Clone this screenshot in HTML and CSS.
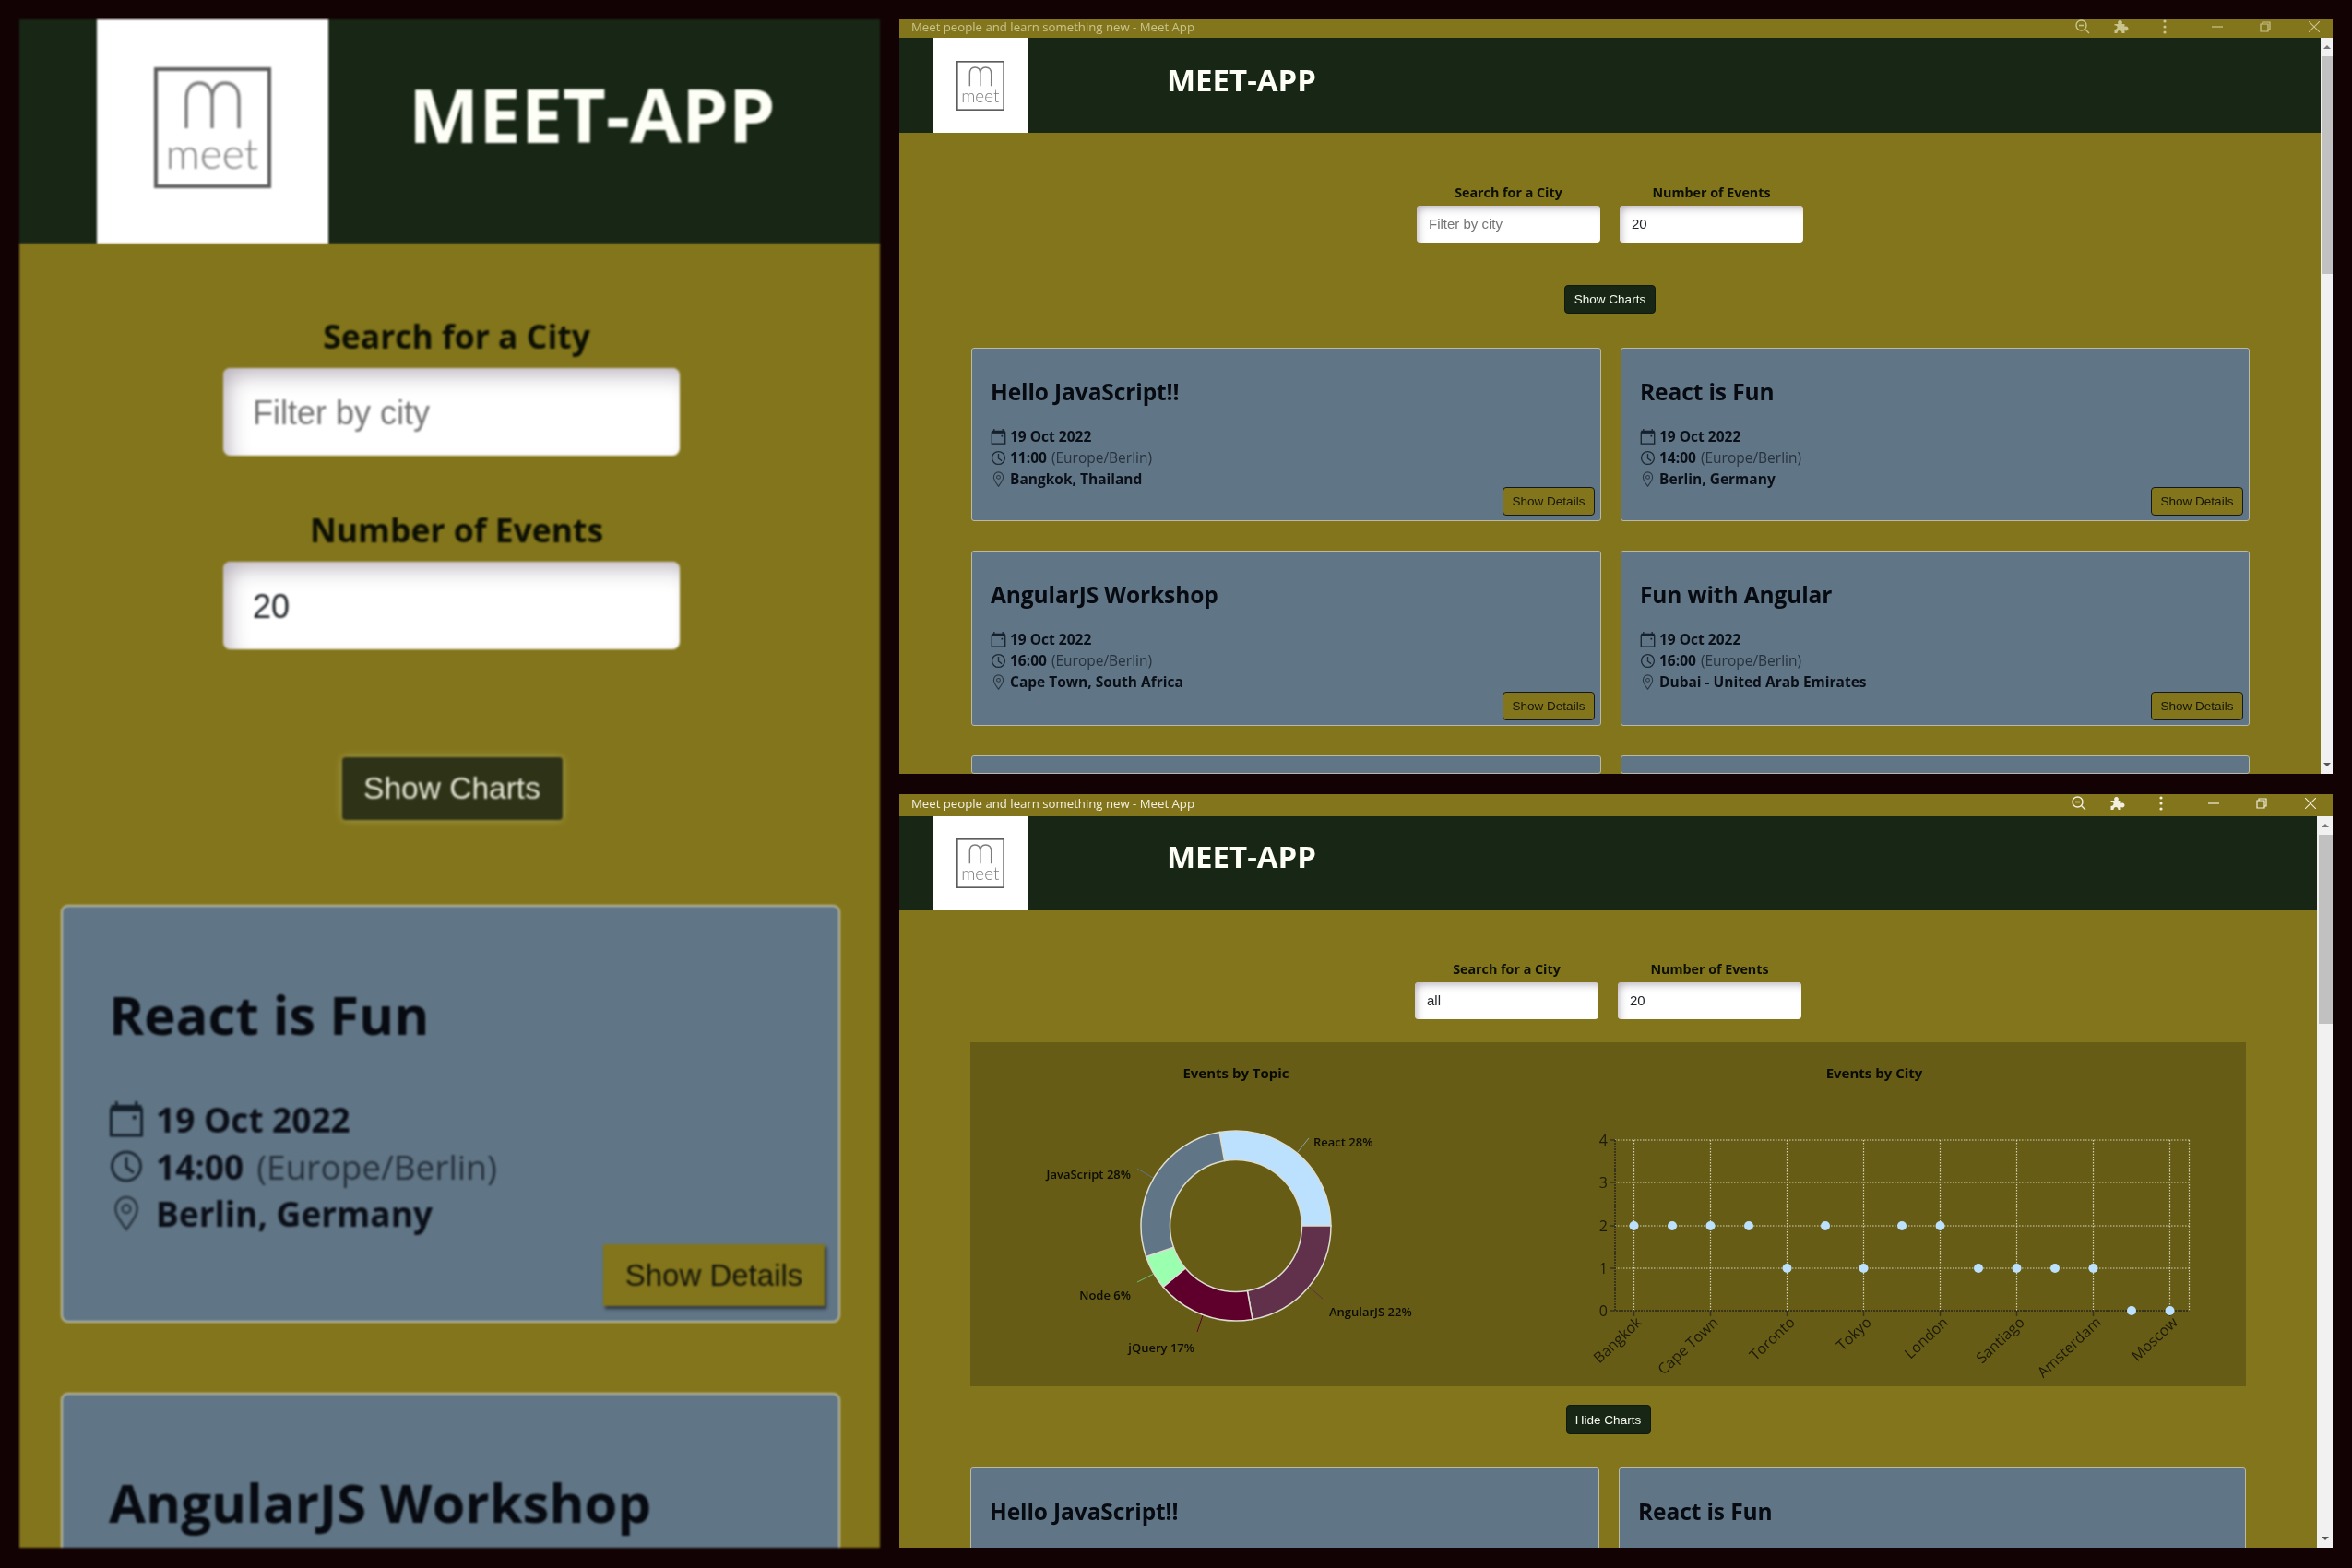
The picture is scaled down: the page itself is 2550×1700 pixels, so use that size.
FILE: index.html
```html
<!DOCTYPE html>
<html lang="en">
<head>
<meta charset="utf-8">
<title>Meet App</title>
<link rel="stylesheet" href="styles.css">
</head>
<body>
<svg class="defs" width="0" height="0" aria-hidden="true">
  <defs>
    <g id="logo-mark">
      <rect x="2" y="2" width="123" height="127" fill="#fff" stroke="#5c5c5c" stroke-width="4"/>
      <path d="M35 66V34C35 23 41 17 49 17C58 17 63 24 63 34V66M63 34C63 24 68 17 77 17C86 17 92 23 92 34V66" fill="none" stroke="#7d7d7d" stroke-width="3.5"/>
    </g>
  </defs>
  <symbol id="cal" viewBox="0 0 38 40">
    <path d="M2 9H36V38H2Z" fill="none" stroke="#14202c" stroke-width="3"/>
    <path d="M2 4H36V11H2Z" fill="#14202c"/>
    <path d="M8 0V5M30 0V5" stroke="#14202c" stroke-width="3"/>
    <rect x="26" y="16" width="4" height="4" fill="#14202c"/>
  </symbol>
  <symbol id="clock" viewBox="0 0 38 38">
    <circle cx="19" cy="19" r="15.5" fill="none" stroke="#1d2935" stroke-width="3"/>
    <path d="M19 9V20L27 26" fill="none" stroke="#1d2935" stroke-width="3"/>
  </symbol>
  <symbol id="pin" viewBox="0 0 38 40">
    <path d="M19 38C12 28 7 22 7 15A12 13 0 0 1 31 15C31 22 26 28 19 38Z" fill="none" stroke="#2b3743" stroke-width="2.6"/>
    <circle cx="19" cy="15" r="4.5" fill="none" stroke="#2b3743" stroke-width="2.4"/>
  </symbol>
  <symbol id="zoom" viewBox="0 0 16 16">
    <circle cx="6.5" cy="6.5" r="5.5" fill="none" stroke="currentColor" stroke-width="1.4"/>
    <path d="M4 6.5H9M10.5 10.5L15 15" fill="none" stroke="currentColor" stroke-width="1.4"/>
  </symbol>
  <symbol id="puzzle" viewBox="0 0 16 16">
    <path d="M1 5H5C4 3 5 1 7 1C9 1 10 3 9 5H12V8C14 7 16 8 16 10C16 12 14 13 12 12V15H9C9 13 8 12 6.500 12C5 12 4 13 4 15H1V11C3 11 4 10 4 8.500C4 7 3 6.500 1 6.500Z" fill="currentColor"/>
  </symbol>
  <symbol id="dots" viewBox="0 0 4 16">
    <circle cx="2" cy="2" r="1.600" fill="currentColor"/>
    <circle cx="2" cy="8" r="1.600" fill="currentColor"/>
    <circle cx="2" cy="14" r="1.600" fill="currentColor"/>
  </symbol>
  <symbol id="min" viewBox="0 0 12 12"><path d="M0 6H12" stroke="currentColor" stroke-width="1.200"/></symbol>
  <symbol id="restore" viewBox="0 0 12 12">
    <path d="M3 2.500V1H11V9H9M1 3H9V11H1Z" fill="none" stroke="currentColor" stroke-width="1.200"/>
  </symbol>
  <symbol id="close" viewBox="0 0 12 12"><path d="M0 0L12 12M12 0L0 12" stroke="currentColor" stroke-width="1.100"/></symbol>
</svg>

<main class="collage">

  <section class="window window-large">
    <div class="page">
      <header class="app-header">
        <div class="logo-box"><svg class="logo" viewBox="0 0 127 131" preserveAspectRatio="none"><use href="#logo-mark"/><text x="63" y="110" class="logo-word" text-anchor="middle">meet</text></svg></div>
        <h1 class="brand">MEET-APP</h1>
      </header>
      <div class="filters">
        <div class="field">
          <label class="field-label">Search for a City</label>
          <div class="input placeholder">Filter by city</div>
        </div>
        <div class="field">
          <label class="field-label">Number of Events</label>
          <div class="input">20</div>
        </div>
      </div>
      <button class="toggle">Show Charts</button>
      <div class="events">
        <article class="card">
          <div class="card-body">
            <h2 class="card-title">React is Fun</h2>
            <div class="meta"><svg class="mi"><use href="#cal"/></svg><b>19 Oct 2022</b></div>
            <div class="meta"><svg class="mi"><use href="#clock"/></svg><b>14:00</b><span class="tz">(Europe/Berlin)</span></div>
            <div class="meta"><svg class="mi"><use href="#pin"/></svg><b>Berlin, Germany</b></div>
          </div>
          <button class="details">Show Details</button>
        </article>
        <article class="card">
          <div class="card-body">
            <h2 class="card-title">AngularJS Workshop</h2>
          </div>
        </article>
      </div>
    </div>
  </section>

  <div class="stack">
    <section class="window window-small window-inactive">
      <div class="titlebar">
        <span class="tab-title">Meet people and learn something new - Meet App</span>
        <div class="controls">
          <svg class="ctl ctl-zoom"><use href="#zoom"/></svg>
          <svg class="ctl ctl-puzzle"><use href="#puzzle"/></svg>
          <svg class="ctl ctl-dots"><use href="#dots"/></svg>
          <svg class="ctl ctl-min"><use href="#min"/></svg>
          <svg class="ctl ctl-restore"><use href="#restore"/></svg>
          <svg class="ctl ctl-close"><use href="#close"/></svg>
        </div>
      </div>
      <div class="viewport">
        <div class="page">
          <header class="app-header">
            <div class="logo-box"><svg class="logo" viewBox="0 0 127 131" preserveAspectRatio="none"><use href="#logo-mark"/><text x="63" y="110" class="logo-word" text-anchor="middle">meet</text></svg></div>
            <h1 class="brand">MEET-APP</h1>
          </header>
          <div class="filters">
            <div class="field">
              <label class="field-label">Search for a City</label>
              <div class="input placeholder">Filter by city</div>
            </div>
            <div class="field">
              <label class="field-label">Number of Events</label>
              <div class="input">20</div>
            </div>
          </div>
          <button class="toggle toggle-show">Show Charts</button>
          <div class="events">
            <article class="card">
              <div class="card-body">
                <h2 class="card-title">Hello JavaScript!!</h2>
                <div class="meta"><svg class="mi"><use href="#cal"/></svg><b>19 Oct 2022</b></div>
                <div class="meta"><svg class="mi"><use href="#clock"/></svg><b>11:00</b><span class="tz">(Europe/Berlin)</span></div>
                <div class="meta"><svg class="mi"><use href="#pin"/></svg><b>Bangkok, Thailand</b></div>
              </div>
              <button class="details">Show Details</button>
            </article>
            <article class="card">
              <div class="card-body">
                <h2 class="card-title">React is Fun</h2>
                <div class="meta"><svg class="mi"><use href="#cal"/></svg><b>19 Oct 2022</b></div>
                <div class="meta"><svg class="mi"><use href="#clock"/></svg><b>14:00</b><span class="tz">(Europe/Berlin)</span></div>
                <div class="meta"><svg class="mi"><use href="#pin"/></svg><b>Berlin, Germany</b></div>
              </div>
              <button class="details">Show Details</button>
            </article>
            <article class="card">
              <div class="card-body">
                <h2 class="card-title">AngularJS Workshop</h2>
                <div class="meta"><svg class="mi"><use href="#cal"/></svg><b>19 Oct 2022</b></div>
                <div class="meta"><svg class="mi"><use href="#clock"/></svg><b>16:00</b><span class="tz">(Europe/Berlin)</span></div>
                <div class="meta"><svg class="mi"><use href="#pin"/></svg><b>Cape Town, South Africa</b></div>
              </div>
              <button class="details">Show Details</button>
            </article>
            <article class="card">
              <div class="card-body">
                <h2 class="card-title">Fun with Angular</h2>
                <div class="meta"><svg class="mi"><use href="#cal"/></svg><b>19 Oct 2022</b></div>
                <div class="meta"><svg class="mi"><use href="#clock"/></svg><b>16:00</b><span class="tz">(Europe/Berlin)</span></div>
                <div class="meta"><svg class="mi"><use href="#pin"/></svg><b>Dubai - United Arab Emirates</b></div>
              </div>
              <button class="details">Show Details</button>
            </article>
            <article class="card"></article>
            <article class="card"></article>
          </div>
        </div>
        <div class="scrollbar scrollbar-top">
          <span class="arrow arrow-up"></span>
          <span class="thumb"></span>
          <span class="track"></span>
          <span class="arrow arrow-down"></span>
        </div>
      </div>
    </section>

    <section class="window window-small window-charts">
      <div class="titlebar">
        <span class="tab-title">Meet people and learn something new - Meet App</span>
        <div class="controls">
          <svg class="ctl ctl-zoom"><use href="#zoom"/></svg>
          <svg class="ctl ctl-puzzle"><use href="#puzzle"/></svg>
          <svg class="ctl ctl-dots"><use href="#dots"/></svg>
          <svg class="ctl ctl-min"><use href="#min"/></svg>
          <svg class="ctl ctl-restore"><use href="#restore"/></svg>
          <svg class="ctl ctl-close"><use href="#close"/></svg>
        </div>
      </div>
      <div class="viewport">
        <div class="page">
          <header class="app-header">
            <div class="logo-box"><svg class="logo" viewBox="0 0 127 131" preserveAspectRatio="none"><use href="#logo-mark"/><text x="63" y="110" class="logo-word" text-anchor="middle">meet</text></svg></div>
            <h1 class="brand">MEET-APP</h1>
          </header>
          <div class="filters">
            <div class="field">
              <label class="field-label">Search for a City</label>
              <div class="input">all</div>
            </div>
            <div class="field">
              <label class="field-label">Number of Events</label>
              <div class="input">20</div>
            </div>
          </div>
          <div class="charts">
            <svg class="chart chart-pie" viewBox="0 0 620 373" width="620" height="373">
              <text class="chart-title" x="288" y="39" text-anchor="middle">Events by Topic</text>
              <g class="slices">
                <path fill="#bbe1ff" d="M270.100 97.600A103 103 0 0 1 391 199L359.500 199A71.500 71.500 0 0 0 275.600 128.600Z"/>
                <path fill="#61304b" d="M391 199A103 103 0 0 1 305.900 300.400L300.400 269.400A71.500 71.500 0 0 0 359.500 199Z"/>
                <path fill="#5e002b" d="M305.900 300.400A103 103 0 0 1 209.100 265.200L233.200 245A71.500 71.500 0 0 0 300.400 269.400Z"/>
                <path fill="#9bffb0" d="M209.100 265.200A103 103 0 0 1 190.600 232.500L220.400 222.300A71.500 71.500 0 0 0 233.200 245Z"/>
                <path fill="#607585" d="M190.600 232.500A103 103 0 0 1 270.100 97.600L275.600 128.600A71.500 71.500 0 0 0 220.400 222.300Z"/>
              </g>
              <path d="M355 119L367 104" stroke="#8aa5a5" fill="none"/>
              <path d="M181 137L198 147" stroke="#607585" fill="none"/>
              <path d="M181 260L199 251" stroke="#6dbb70" fill="none"/>
              <path d="M246 314L252 296" stroke="#5e002b" fill="none"/>
              <path d="M367 265L382 278" stroke="#61304b" fill="none"/>
              <text class="pie-label" x="372" y="113">React 28%</text>
              <text class="pie-label" x="174" y="148" text-anchor="end">JavaScript 28%</text>
              <text class="pie-label" x="174" y="279" text-anchor="end">Node 6%</text>
              <text class="pie-label" x="243" y="336" text-anchor="end">jQuery 17%</text>
              <text class="pie-label" x="389" y="297">AngularJS 22%</text>
            </svg>
            <svg class="chart chart-scatter" viewBox="-60 0 763 373" width="763" height="373">
              <text class="chart-title" x="300" y="39" text-anchor="middle">Events by City</text>
              <g class="grid-lines">
                <path d="M19 106H641.500M19 152H641.500M19 199H641.500M19 245H641.500"/>
                <path d="M39.500 106V291M122.500 106V291M205.500 106V291M288.500 106V291M371.500 106V291M454.500 106V291M537.500 106V291M620.500 106V291M641.500 106V291"/>
              </g>
              <path class="axis" d="M19 106V291H641.500"/>
              <path class="tick" d="M13 106H19M13 152H19M13 199H19M13 245H19M13 291H19M39.500 291V297M122.500 291V297M205.500 291V297M288.500 291V297M371.500 291V297M454.500 291V297M537.500 291V297M620.500 291V297"/>
              <g class="y-labels" text-anchor="end">
                <text x="11" y="112">4</text>
                <text x="11" y="158">3</text>
                <text x="11" y="205">2</text>
                <text x="11" y="251">1</text>
                <text x="11" y="297">0</text>
              </g>
              <g class="x-labels" text-anchor="end">
                <text transform="translate(49 305) rotate(-43)">Bangkok</text>
                <text transform="translate(132 305) rotate(-43)">Cape Town</text>
                <text transform="translate(215 305) rotate(-43)">Toronto</text>
                <text transform="translate(298 305) rotate(-43)">Tokyo</text>
                <text transform="translate(381 305) rotate(-43)">London</text>
                <text transform="translate(464 305) rotate(-43)">Santiago</text>
                <text transform="translate(547 305) rotate(-43)">Amsterdam</text>
                <text transform="translate(630 305) rotate(-43)">Moscow</text>
              </g>
              <g class="dots" fill="#bbe1ff">
                <circle cx="39.500" cy="199" r="5"/><circle cx="81" cy="199" r="5"/>
                <circle cx="122.500" cy="199" r="5"/><circle cx="164" cy="199" r="5"/>
                <circle cx="205.500" cy="245" r="5"/><circle cx="247" cy="199" r="5"/>
                <circle cx="288.500" cy="245" r="5"/><circle cx="330" cy="199" r="5"/>
                <circle cx="371.500" cy="199" r="5"/><circle cx="413" cy="245" r="5"/>
                <circle cx="454.500" cy="245" r="5"/><circle cx="496" cy="245" r="5"/>
                <circle cx="537.500" cy="245" r="5"/><circle cx="579" cy="291" r="5"/>
                <circle cx="620.500" cy="291" r="5"/>
              </g>
            </svg>
          </div>
          <button class="toggle toggle-hide">Hide Charts</button>
          <div class="events">
            <article class="card">
              <div class="card-body"><h2 class="card-title">Hello JavaScript!!</h2></div>
            </article>
            <article class="card">
              <div class="card-body"><h2 class="card-title">React is Fun</h2></div>
            </article>
          </div>
        </div>
        <div class="scrollbar scrollbar-bottom">
          <span class="arrow arrow-up"></span>
          <span class="thumb"></span>
          <span class="track"></span>
          <span class="arrow arrow-down"></span>
        </div>
      </div>
    </section>
  </div>
</main>
</body>
</html>
```

FILE: styles.css
```css
* { box-sizing: border-box; }

html, body {
  margin: 0;
  height: 100%;
  background: #120204;
}

body {
  font-family: "Open Sans", "Noto Sans", sans-serif;
  color: #0b0d10;
  overflow: hidden;
}

.defs { display: block; height: 0; }

.logo-word {
  font-family: Lato, "Open Sans", sans-serif;
  font-weight: 300;
  font-size: 46px;
  fill: #7d7d7d;
}

.collage {
  display: grid;
  grid-template-columns: 933px 1554px;
  column-gap: 21px;
  padding: 21px;
  height: 1699px;
  align-items: start;
}

.stack {
  display: grid;
  grid-template-rows: 818px 817px;
  row-gap: 22px;
}

.window {
  background: #83751b;
  overflow: hidden;
  display: flex;
  flex-direction: column;
}

.titlebar {
  display: flex;
  align-items: center;
  padding: 0 0 6px 13px;
  color: #f2efe0;
  font-size: 13.200px;
  flex: none;
}

.controls { margin-left: auto; display: flex; align-items: center; }
.ctl { display: block; flex: none; }
.ctl-zoom { width: 16px; height: 16px; }
.ctl-puzzle { width: 17px; height: 16px; margin-left: 25px; }
.ctl-dots { width: 4px; height: 16px; margin-left: 37px; }
.ctl-min { width: 12px; height: 12px; margin-left: 49px; }
.ctl-restore { width: 12px; height: 12px; margin-left: 40px; }
.ctl-close { width: 12px; height: 12px; margin-left: 41px; margin-right: 18px; }
.window-inactive .ctl-close { margin-right: 14px; }

.viewport { flex: 1; display: flex; min-height: 0; }
.page { flex: 1; min-width: 0; overflow: hidden; display: flex; flex-direction: column; }

.app-header { display: flex; background: #182715; flex: none; }
.logo-box { background: #fff; display: flex; align-items: center; justify-content: center; flex: none; }
.logo { display: block; }
.brand { margin: 0; color: #fdfff7; font-weight: 700; white-space: nowrap; }

.field { display: flex; flex-direction: column; }
.field-label { text-align: center; font-weight: 700; color: #0c0f04; white-space: nowrap; }
.input {
  background: #fff;
  color: #22262a;
  font-family: "Liberation Sans", Arial, sans-serif;
  display: flex;
  align-items: center;
}
.placeholder { color: #757575; }

.toggle {
  display: block;
  align-self: center;
  flex: none;
  font-family: "Liberation Sans", Arial, sans-serif;
  color: #f6f7ee;
  background: #182715;
  padding: 0;
}

.card {
  background: #607585;
  border: 1px solid #b9b9a6;
  display: grid;
  grid-template-rows: 1fr auto;
  overflow: hidden;
}
.card-body { grid-area: 1 / 1 / 3 / 2; }
.card-title { margin: 0; font-weight: 700; color: #070a10; white-space: nowrap; }
.meta { display: flex; align-items: center; white-space: nowrap; }
.meta b { font-weight: 700; color: #0b0f18; }
.tz { color: #27323e; font-weight: 400; }
.details {
  grid-area: 2 / 1 / 3 / 2;
  justify-self: end;
  font-family: "Liberation Sans", Arial, sans-serif;
  background: #83751b;
  color: #15160a;
  padding: 0;
}

/* large, zoomed-in window */
.window-large { height: 1657px; filter: blur(0.9px); }
.window-large .app-header { height: 243px; }
.window-large .logo-box { width: 251px; margin-left: 84px; padding-bottom: 8px; }
.window-large .logo { width: 127px; height: 131px; }
.window-large .brand { font-size: 81px; line-height: 100px; margin: 53px 0 0 87px; }
.window-large .filters { margin: 78px 0 0 221px; width: 506px; display: flex; flex-direction: column; row-gap: 58px; }
.window-large .field-label { font-size: 35.500px; line-height: 44px; margin-bottom: 13px; }
.window-large .input {
  width: 495px;
  height: 95px;
  font-size: 36px;
  padding: 3px 0 0 32px;
  border-radius: 8px;
  box-shadow: inset 10px 12px 24px -6px #b5aeb8;
}
.window-large .toggle {
  margin-top: 117px;
  margin-left: 5px;
  width: 239px;
  height: 68px;
  font-size: 33.500px;
  color: #e4e5d4;
  background: #2e3216;
  border: 0;
  border-radius: 4px;
  box-shadow: 0 0 8px #a7a25a;
}
.window-large .events { margin: 92px 43px 0 45px; display: flex; flex-direction: column; row-gap: 76px; }
.window-large .card { height: 453px; flex: none; border-width: 2.500px; border-radius: 8px; padding: 0 15px 16px 0; }
.window-large .card-body { padding: 82px 0 0 50px; }
.window-large .card-title { font-size: 58px; line-height: 70px; margin-bottom: 53px; }
.window-large .meta { font-size: 37px; line-height: 51px; }
.window-large .tz { margin-left: 14px; }
.window-large .mi { width: 38px; height: 39px; margin-right: 13px; flex: none; }
.window-large .details {
  width: 240px;
  height: 67px;
  font-size: 33px;
  border: 0;
  box-shadow: 2px 3px 3px #2b3440;
}

/* desktop windows */
.window-small { filter: blur(0.35px); }
.window-small .titlebar { height: 20px; padding-bottom: 5px; }
.window-small .app-header { height: 103px; }
.window-small .logo-box { width: 102px; margin-left: 37px; }
.window-small .logo { width: 52px; height: 54px; }
.window-small .brand { font-size: 33px; line-height: 40px; margin: 26px 0 0 151px; }
.window-small .filters { margin-top: 55px; align-self: center; display: flex; column-gap: 21px; }
.window-small .field { width: 199px; }
.window-small .field-label { font-size: 14.300px; line-height: 20px; margin-bottom: 4px; }
.window-small .input {
  height: 40px;
  font-size: 15px;
  padding: 0 0 1px 13px;
  border-radius: 4px;
  box-shadow: inset 4px 5px 10px -3px #b5aeb8;
}
.window-small .toggle {
  font-size: 13.500px;
  border: 1px solid #0e1a0b;
  border-radius: 4px;
}
.window-small .toggle-show { margin-top: 46px; width: 99px; height: 31px; }
.window-small .toggle-hide { margin-top: 20px; width: 92px; height: 32px; }
.window-small .events {
  margin: 37px 0 0 78px;
  display: grid;
  grid-template-columns: 683px 682px;
  column-gap: 21px;
  row-gap: 32px;
  grid-template-rows: 188px 190px 20px;
}
.window-small .card { border-width: 1.500px; border-radius: 3px; padding: 0 6px 5px 0; }
.window-small .card-body { padding: 32px 0 0 20px; }
.window-small .card-title { font-size: 24.500px; line-height: 30px; margin-bottom: 22px; letter-spacing: -0.1px; }
.window-small .meta { font-size: 15.500px; line-height: 23px; }
.window-small .tz { margin-left: 5px; }
.window-small .mi { width: 17px; height: 17px; margin-right: 4px; flex: none; }
.window-small .details {
  width: 100px;
  height: 31px;
  font-size: 13.500px;
  border: 1.500px solid #14181c;
  border-radius: 4px;
}

.window-inactive .titlebar { color: #c9c48e; }
.window-inactive .controls { color: #c9c48e; }

.window-charts .titlebar { height: 24px; }
.window-charts .app-header { height: 102px; }
.window-charts .brand { margin-top: 24px; }
.window-charts .filters { margin-top: 54px; }
.window-charts .events { margin: 36px 0 0 77px; grid-template-columns: 682px 680px; grid-template-rows: 188px; }

.charts {
  margin: 25px 0 0 77px;
  width: 1383px;
  height: 373px;
  flex: none;
  background: #675c15;
  display: flex;
}
.chart { display: block; flex: none; }
.chart-title { font-size: 15px; font-weight: 700; fill: #080a04; }
.pie-label { font-size: 13px; font-weight: 600; fill: #0b0c04; }
.slices path { stroke: #dcdcd0; stroke-width: 1.500; }
.grid-lines path { fill: none; stroke: #d2d0b4; stroke-width: 1.200; stroke-dasharray: 1.500 1.500; }
.axis { fill: none; stroke: #38341c; stroke-width: 2; stroke-dasharray: 2 1; }
.tick { fill: none; stroke: #38341c; stroke-width: 1.500; }
.y-labels text { font-size: 16px; fill: #1c1a08; }
.x-labels text { font-size: 16px; fill: #1c1a08; }

.scrollbar {
  flex: none;
  display: flex;
  flex-direction: column;
  background: #f1f1f1;
  align-items: stretch;
}
.scrollbar-top { width: 13px; }
.scrollbar-bottom { width: 17px; }
.arrow { flex: none; height: 20px; display: flex; align-items: center; justify-content: center; }
.arrow::before {
  content: "";
  border-left: 4px solid transparent;
  border-right: 4px solid transparent;
}
.arrow-up::before { border-bottom: 4px solid #777; }
.arrow-down::before { border-top: 4px solid #555; }
.thumb { flex: none; background: #c1c1c1; margin: 0 0 0 2px; }
.scrollbar-top .thumb { height: 236px; }
.scrollbar-bottom .thumb { height: 205px; }
.track { flex: 1; }
```
